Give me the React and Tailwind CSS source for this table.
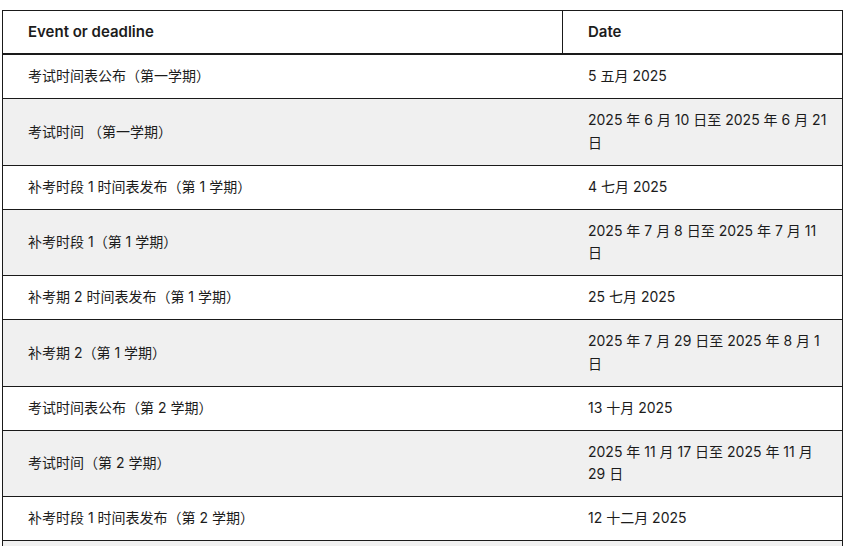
import React from "react";

const rows = [
  ["考试时间表公布（第一学期）", "5 五月 2025"],
  ["考试时间 （第一学期）", "2025 年 6 月 10 日至 2025 年 6 月 21\n日"],
  ["补考时段 1 时间表发布（第 1 学期）", "4 七月 2025"],
  ["补考时段 1（第 1 学期）", "2025 年 7 月 8 日至 2025 年 7 月 11\n日"],
  ["补考期 2 时间表发布（第 1 学期）", "25 七月 2025"],
  ["补考期 2（第 1 学期）", "2025 年 7 月 29 日至 2025 年 8 月 1\n日"],
  ["考试时间表公布（第 2 学期）", "13 十月 2025"],
  ["考试时间（第 2 学期）", "2025 年 11 月 17 日至 2025 年 11 月\n29 日"],
  ["补考时段 1 时间表发布（第 2 学期）", "12 十二月 2025"],
  ["补考时段 2（第 2 学期）", "2026 年 1 月 5 日至 2026 年 1 月 9\n日"],
];

export default function App() {
  return (
    <div
      className="bg-white pt-[10px] pl-[2px] text-[#1c1c1c]"
      style={{ fontFamily: '"Inter", "Noto Sans CJK SC", sans-serif' }}
    >
      <div className="w-[841px] border border-[#1a1a1a] text-[14px]">
        {/* header */}
        <div className="flex h-[44px] border-b-2 border-[#1a1a1a] text-[15px] font-semibold">
          <div className="flex w-[560px] items-center border-r border-[#1a1a1a] pl-[25px]">
            Event or deadline
          </div>
          <div className="flex flex-1 items-center pl-[25px]">Date</div>
        </div>

        {/* body */}
        {rows.map(([event, date], i) => (
          <div
            key={i}
            className={`flex border-b border-[#1a1a1a] py-[10.25px] leading-[22.5px] ${
              i % 2 === 1 ? "bg-[#f0f0f0]" : "bg-white"
            }`}
          >
            <div className="flex w-[560px] items-center pl-[25px]">{event}</div>
            <div className="flex-1 whitespace-pre-line pl-[25px] pr-[4px]">{date}</div>
          </div>
        ))}
      </div>
    </div>
  );
}
